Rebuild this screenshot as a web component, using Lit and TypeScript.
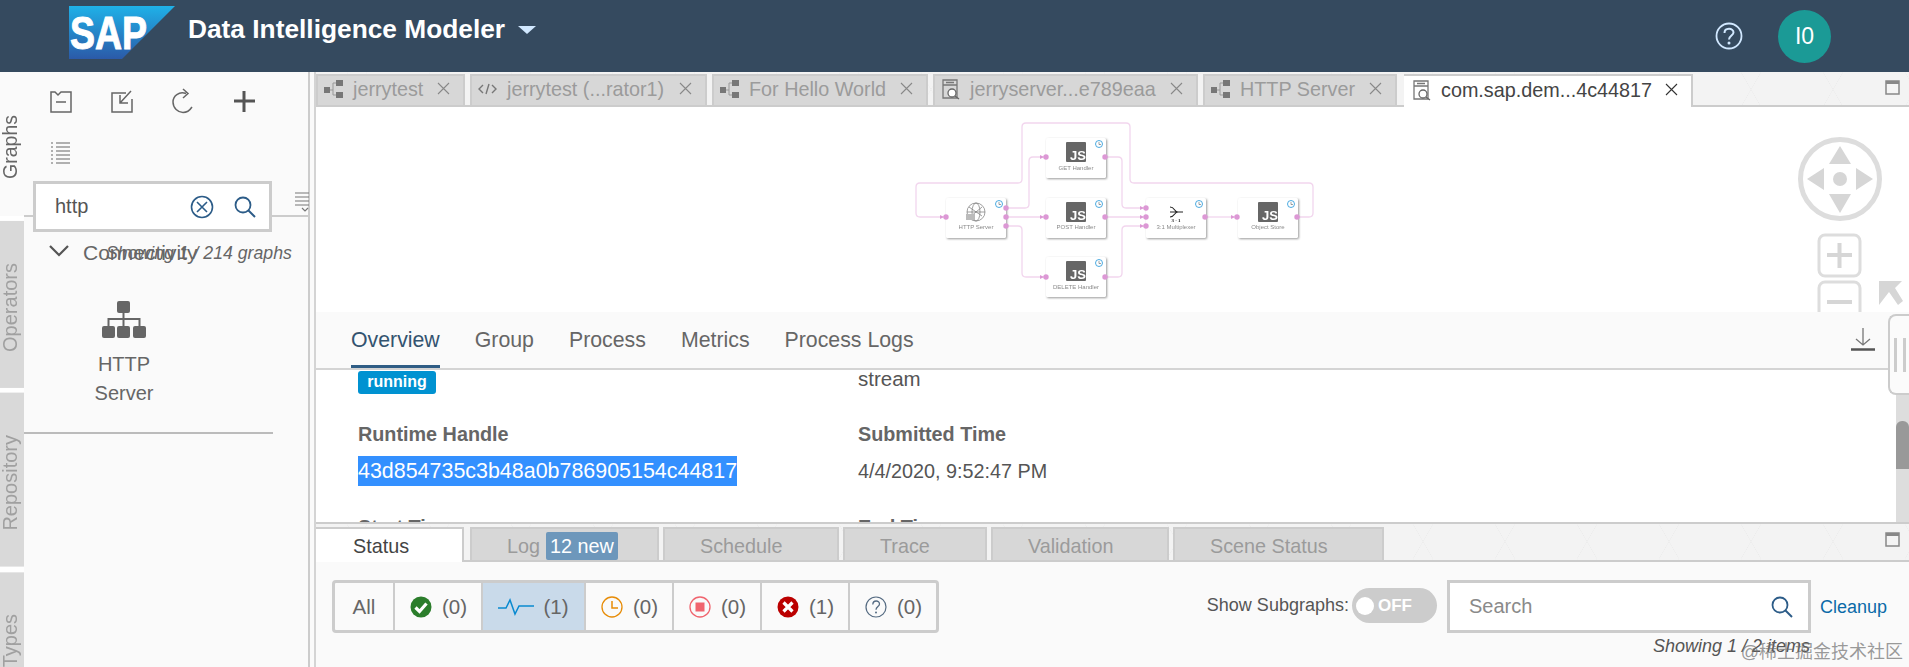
import { LitElement, html, css, svg } from "lit";
import { customElement } from "lit/decorators.js";

const wire = (pts: number[][], r = 4) => {
  let d = `M${pts[0][0]} ${pts[0][1]}`;
  for (let i = 1; i < pts.length; i++) {
    const p = pts[i], prev = pts[i - 1], next = pts[i + 1];
    if (!next) { d += ` L${p[0]} ${p[1]}`; break; }
    const ux = Math.sign(p[0] - prev[0]), uy = Math.sign(p[1] - prev[1]);
    const vx = Math.sign(next[0] - p[0]), vy = Math.sign(next[1] - p[1]);
    d += ` L${p[0] - ux * r} ${p[1] - uy * r} Q${p[0]} ${p[1]} ${p[0] + vx * r} ${p[1] + vy * r}`;
  }
  return d;
};

const WIRES = [
  [[1006, 208], [1029, 208], [1029, 157], [1046, 157]],
  [[1006, 217], [1046, 217]],
  [[1006, 226], [1022, 226], [1022, 277], [1046, 277]],
  [[1105, 157], [1122, 157], [1122, 208], [1146, 208]],
  [[1105, 217], [1146, 217]],
  [[1105, 277], [1122, 277], [1122, 226], [1146, 226]],
  [[1205, 217], [1237, 217]],
  [[1297, 217], [1313, 217], [1313, 183], [1130, 183], [1130, 123], [1022, 123], [1022, 183], [916, 183], [916, 217], [946, 217]],
];

const NODES = [
  { x: 946, y: 198, w: 60, label: "HTTP Server", icon: "globe" },
  { x: 1046, y: 138, w: 60, label: "GET Handler", icon: "js" },
  { x: 1046, y: 198, w: 60, label: "POST Handler", icon: "js" },
  { x: 1046, y: 257, w: 60, label: "DELETE Handler", icon: "js" },
  { x: 1146, y: 198, w: 60, label: "3:1 Multiplexer", icon: "mux" },
  { x: 1238, y: 198, w: 60, label: "Object Store", icon: "js" },
];

const PORTS = [
  [946, 217], [1006, 208], [1006, 217], [1006, 226], [1046, 157], [1105, 157], [1046, 217], [1105, 217],
  [1046, 277], [1105, 277], [1146, 208], [1146, 217], [1146, 226], [1205, 217], [1237, 217], [1297, 217],
];

const graphIcon = svg`<rect x="1" y="8" width="6" height="6" fill="#777"/><rect x="13" y="1" width="7" height="6" fill="#777"/><rect x="13" y="13" width="7" height="6" fill="#777"/><path d="M7 11H10M13 4H10V16H13" fill="none" stroke="#999" stroke-width="1"/>`;
const runIcon = svg`<path d="M3 1H17V19H3ZM3 6H17M6 3.500H14" fill="none" stroke="#777" stroke-width="1.300"/><circle cx="12" cy="14" r="4" fill="#fff" stroke="#666" stroke-width="1.300"/><path d="M15 17L19 20" stroke="#666" stroke-width="1.300"/>`;
const codeIcon = svg`<path d="M6 6L2 10L6 14M15 6L19 10L15 14M12 5L9 15" fill="none" stroke="#777" stroke-width="1.400"/>`;

const TOP_TABS = [
  { t: "jerrytest", i: graphIcon, w: 149 },
  { t: "jerrytest (...rator1)", i: codeIcon, w: 237 },
  { t: "For Hello World", i: graphIcon, w: 216 },
  { t: "jerryserver...e789eaa", i: runIcon, w: 265 },
  { t: "HTTP Server", i: graphIcon, w: 194 },
  { t: "com.sap.dem...4c44817", i: runIcon, w: 289, active: true },
];

const FILTERS = [
  { n: "(0)", i: svg`<circle cx="12" cy="12" r="10.500" fill="#2b7d2b"/><path d="M6.500 12.500L10.500 16.500L17.500 8.500" fill="none" stroke="#fff" stroke-width="3.200"/>` },
  { n: "(1)", sel: true, wide: true, i: svg`<path d="M0 13H8L12 5L17 19L21 11H36" fill="none" stroke="#0a8ad0" stroke-width="1.500" />` },
  { n: "(0)", i: svg`<circle cx="12" cy="12" r="10" fill="none" stroke="#e78c07" stroke-width="1.300"/><path d="M12 6V13H18" fill="none" stroke="#e78c07" stroke-width="1.500"/>` },
  { n: "(0)", i: svg`<circle cx="12" cy="12" r="10" fill="none" stroke="#f0646e" stroke-width="1.300"/><rect x="7.500" y="7.500" width="9" height="9" fill="#f0646e"/>` },
  { n: "(1)", i: svg`<circle cx="12" cy="12" r="10.500" fill="#bb0000"/><path d="M7.500 7.500L16.500 16.500M16.500 7.500L7.500 16.500" stroke="#fff" stroke-width="3.200"/>` },
  { n: "(0)", i: svg`<circle cx="12" cy="12" r="10" fill="none" stroke="#556b82" stroke-width="1.200"/><path d="M8.800 9.500C9 4.800 15.500 5 15.500 9C15.500 11.500 12 11.500 12 14.800" fill="none" stroke="#556b82" stroke-width="1.300"/><circle cx="12" cy="17.500" r="1" fill="#556b82"/>` },
];

const BOTTOM_TABS = [
  { t: "Schedule", w: 176 },
  { t: "Trace", w: 144 },
  { t: "Validation", w: 178 },
  { t: "Scene Status", w: 211 },
];

const searchIcon = html`<svg width="24" height="24" viewBox="0 0 24 24"><circle cx="10" cy="10" r="7.500" fill="none" stroke="#2c5c88" stroke-width="1.800"/><path d="M15.500 15.500L22 22" stroke="#2c5c88" stroke-width="2"/></svg>`;
const closeIcon = html`<svg class="x" width="13" height="13" viewBox="0 0 13 13"><path d="M1 1L12 12M12 1L1 12" stroke="currentColor" stroke-width="1.100"/></svg>`;
const maxIcon = html`<svg class="max" width="15" height="15" viewBox="0 0 15 15"><rect x="1" y="1" width="13" height="13" fill="#f4f4f4" stroke="#888" stroke-width="1.500"/><rect x="1" y="1" width="13" height="3" fill="#888"/></svg>`;

@customElement("app-root")
export class AppRoot extends LitElement {
  static styles = css`
    :host { display: block; width: 1909px; height: 667px; overflow: hidden; position: relative; background: #fafafa;
      font-family: "Liberation Sans", Arial, sans-serif; color: #666; }
    .shell { display: grid; grid-template-rows: 72px 595px; height: 667px; }
    header { background: #354a5f; display: flex; align-items: center; padding-left: 69px; }
    .logo { display: block; margin-top: -6px; }
    .title { color: #fff; font-size: 26.300px; font-weight: 700; margin-left: 12px; margin-top: -13px; white-space: nowrap; }
    .caret { margin: -12px 0 0 13px; width: 0; height: 0; border-left: 9px solid transparent; border-right: 9px solid transparent; border-top: 8px solid #d1e8ff; }
    .hdr-right { margin-left: auto; display: flex; align-items: center; gap: 35px; margin-right: 78px; }
    .avatar { width: 53px; height: 53px; border-radius: 50%; background: #1b9a96; color: #fff; font-size: 23px; display: flex; align-items: center; justify-content: center; }
    .body { display: flex; min-height: 0; overflow: hidden; }

    .rail { width: 24px; flex: none; display: flex; flex-direction: column; gap: 5px; background: #fff; }
    .rail div { background: #d9d9d9; color: #a0a0a0; writing-mode: vertical-rl; transform: rotate(180deg); font-size: 20px; line-height: 20px; padding: 36px 0 42px 4px; flex: none; width: 20px; text-align: left; white-space: nowrap; }
    .rail div.on { background: #fafafa; color: #666; font-size: 19.500px; padding: 37px 0 43px 4px; }

    .left { width: 284px; flex: none; background: #fafafa; position: relative; border-right: 2px solid #ccc; box-sizing: content-box; }
    .tools { display: grid; grid-template-columns: repeat(4, 61px); grid-auto-rows: 51px; padding: 3px 0 0 6px; height: 106px; box-sizing: border-box; align-items: center; justify-items: center; }
    .searchrow { position: relative; border-bottom: 2px solid #ccc; box-sizing: border-box; height: 39px; }
    .searchbox { position: absolute; left: 9px; top: 3px; width: 239px; height: 51px; box-sizing: border-box; border: 3px solid #ccc; background: #fff; display: flex; align-items: center; padding: 0 12px 0 19px; font-size: 20px; color: #555; z-index: 1; }
    .searchbox .clear { margin-left: auto; margin-right: 19px; display: block; }
    .filt { position: absolute; left: 270px; top: 13px; }
    .group { position: relative; height: 84px; }
    .conn { position: absolute; left: 59px; top: 24px; font-size: 21px; line-height: 24px; color: #666; white-space: nowrap; }
    .showing { position: absolute; left: 82px; top: 26px; font-size: 17.700px; line-height: 20px; font-style: italic; color: #666; white-space: nowrap; }
    .chev { position: absolute; left: 25px; top: 28px; }
    .gitem { width: 100px; margin-left: 50px; text-align: center; font-size: 20px; line-height: 29px; color: #666; display: flex; flex-direction: column; align-items: center; gap: 11px; }
    .gsep { height: 2px; background: #bbb; width: 249px; margin-top: 24px; }

    .main { flex: 1; min-width: 0; margin-left: 4px; border-left: 2px solid #d4d4d4; display: flex; flex-direction: column; background: #fff; position: relative; }
    .strip { background-color: #f3f3f3;
      background-image: linear-gradient(60deg, transparent 49.500%, #ebebeb 50%, transparent 50.500%), linear-gradient(-60deg, transparent 49.500%, #ebebeb 50%, transparent 50.500%);
      background-size: 82px 35px; display: flex; align-items: flex-end; position: relative; flex: none; }
    .toptabs { height: 35px; border-bottom: 2px solid #ccc; box-sizing: border-box; gap: 5px; }
    .tab { height: 31px; background: #d7d7d7; border: 2px solid #ccc; border-bottom: 0; box-sizing: border-box; display: flex; align-items: center; gap: 9px; padding: 0 13px 2px 5px; font-size: 19.800px; color: #9b9b9b; white-space: nowrap; flex: none; }
    .tab svg.ti { flex: none; }
    .tab .x { margin-left: auto; color: #888; margin-top: -3px; }
    .tab.on { background: #fff; color: #444; height: 33px; margin-bottom: -2px; padding: 0 13px 2px 7px; border-left: 0; margin-left: 2px; }
    .tab.on .x { color: #333; }
    .max { position: absolute; right: 9px; top: 8px; }

    .canvas { height: 205px; flex: none; position: relative; overflow: hidden; background: #fff; }
    .graph { position: absolute; left: 0; top: 0; filter: blur(0.3px); }
    .graph .node { fill: #fff; filter: drop-shadow(1px 1px 1px #999); }
    .graph text.lbl { font-family: "Liberation Sans", sans-serif; font-size: 6px; fill: #8a8a8a; text-anchor: middle; }
    .graph text.js { font-family: "Liberation Sans", sans-serif; font-size: 13px; font-weight: 700; fill: #fff; text-anchor: middle; }
    .graph text.mx { font-family: "Liberation Serif", serif; font-size: 5px; font-weight: 700; fill: #222; text-anchor: middle; }
    .nav { position: absolute; left: 1480px; top: 26px; }
    .corner { position: absolute; left: 1563px; top: 174px; }

    .dtabs { height: 58px; flex: none; box-sizing: border-box; background: #fafafa; border-bottom: 2px solid #d4d4d4; display: flex; gap: 35px; padding-left: 35px; font-size: 21.300px; position: relative; }
    .dtabs span { height: 56px; display: flex; align-items: center; box-sizing: border-box; color: #666; white-space: nowrap; }
    .dtabs span.on { color: #33536f; border-bottom: 3px solid #2f5d85; padding-top: 3px; }
    .dl { position: absolute; right: 34px; top: 15px; }

    .details { height: 152px; flex: none; overflow: hidden; display: grid; grid-template-columns: 500px 1fr; grid-template-rows: 49px 26px 39px 1fr; padding-left: 42px; box-sizing: border-box; background: #fff; font-size: 19.800px; color: #555; padding-top: 2px; }
    .details b { color: #666; font-size: 19.800px; display: block; align-self: end; line-height: 26px; }
    .details .v { line-height: 30px; align-self: end; }
    .badge { align-self: start; justify-self: start; width: 78px; height: 23px; background: #0092d1; border-radius: 3px; color: #fff; font-weight: 700; font-size: 16px; line-height: 21px; text-align: center; margin-top: -1px; }
    .stream { align-self: start; line-height: 20px; margin-top: -3px; font-size: 20.500px; }
    .sel { background: #3390ff; color: #fff; display: block; width: fit-content; font-size: 21.450px; line-height: 30px; }
    .details b.rowc { padding-top: 28px; align-self: start; }

    .grip { position: absolute; right: 0; top: 242px; width: 21px; height: 81px; box-sizing: border-box; border: 2px solid #ccc; border-right: 0; border-radius: 8px 0 0 8px; background: #fbfbfb; display: flex; gap: 6px; align-items: center; justify-content: center; z-index: 2; }
    .grip i { width: 3px; height: 34px; background: #ccc; display: block; }
    .track { position: absolute; right: 0; top: 323px; width: 13px; height: 127px; background: #ddd; }
    .thumb { position: absolute; right: 0; top: 349px; width: 13px; height: 48px; background: #999; border-radius: 6px 6px 0 0; }

    .bottom { flex: 1; min-height: 0; border-top: 2px solid #ccc; position: relative; background: #fafafa; display: flex; flex-direction: column; }
    .btabs { height: 38px; border-bottom: 2px solid #ccc; box-sizing: border-box; gap: 4px; }
    .bt { height: 33px; box-sizing: border-box; background: #d7d7d7; border: 2px solid #ccc; border-bottom: 0; display: flex; align-items: center; font-size: 19.800px; color: #9b9b9b; white-space: nowrap; padding: 3px 0 0 35px; flex: none; }
    .bt.on { background: #fff; color: #444; margin-bottom: -2px; height: 35px; border-left: 0; padding: 1px 0 0 37px; margin-right: 2px; }
    .bt .nw { background: #6d97bb; color: #fff; height: 28px; line-height: 28px; padding: 0 4px; border-radius: 2px; margin: -1px 0 0 6px; }
    .panel { flex: 1; display: flex; align-items: flex-start; padding: 18px 0 0 16px; background: #fafafa; position: relative; }
    .seg { display: flex; height: 53px; border: 3px solid #ccc; border-radius: 4px; box-sizing: border-box; background: #fafafa; }
    .seg > div { display: flex; align-items: center; justify-content: center; gap: 9px; font-size: 20.500px; color: #666; width: 86px; border-right: 2px solid #ccc; }
    .seg > div:last-child { border-right: 0; }
    .seg > div.all { width: 58px; }
    .seg > div.sel2 { background: #c9daea; width: 101px; }
    .subs { margin-left: auto; display: flex; align-items: flex-start; }
    .slabel { font-size: 18px; color: #555; margin-top: 15px; white-space: nowrap; margin-right: 3px; }
    .toggle { width: 85px; height: 35px; border-radius: 18px; background: #ccc; margin-top: 8px; display: flex; align-items: center; gap: 4px; padding-left: 4px; box-sizing: border-box; color: #fff; font-weight: 700; font-size: 17px; }
    .toggle i { width: 18px; height: 18px; background: #fff; border-radius: 50%; display: block; }
    .sbox { width: 364px; height: 53px; box-sizing: border-box; border: 3px solid #ccc; background: #fff; margin-left: 10px; display: flex; align-items: center; justify-content: space-between; padding: 0 14px 0 19px; color: #8a8a8a; font-size: 20px; }
    .clean { color: #0a6aa8; font-size: 18px; margin: 17px 22px 0 9px; }
    .count { position: absolute; right: 99px; top: 74px; font-size: 18px; line-height: 20px; font-style: italic; color: #555; white-space: nowrap; }
    .wm { position: absolute; right: 6px; bottom: 4px; font-family: "Liberation Sans", "Noto Sans CJK SC", sans-serif; font-size: 18px; color: rgba(110,110,110,0.7); white-space: nowrap; z-index: 5; }
  `;

  private renderGraph() {
    return html`<svg class="graph" width="1593" height="205" viewBox="316 107 1593 205">
      ${WIRES.map((w) => svg`<path d=${wire(w)} fill="none" stroke="#f2d6ee" stroke-width="1.300"/>`)}
      ${NODES.map((n) => {
        const cx = n.x + n.w / 2;
        const ly = n.y + (n.label.startsWith("DELETE") ? 32 : n.label.startsWith("GET") ? 32 : 31);
        const sx = n.x + n.w - 7;
        return svg`<rect class="node" x=${n.x} y=${n.y} width=${n.w} height="40" rx="1.500"/>
          ${n.icon === "js" ? svg`<rect x=${cx - 10} y=${n.y + 4} width="20" height="20" rx="1" fill="#666"/><text class="js" x=${cx + 2} y=${n.y + 22}>JS</text>` : ""}
          ${n.icon === "globe" ? svg`<g fill="none" stroke="#777" stroke-width="0.700"><circle cx=${cx} cy=${n.y + 14} r="9"/><ellipse cx=${cx} cy=${n.y + 14} rx="4" ry="9"/><path d="M${cx - 9} ${n.y + 14}H${cx + 9}M${cx - 7} ${n.y + 9}L${cx + 6} ${n.y + 18}M${cx + 6} ${n.y + 9}L${cx - 6} ${n.y + 19}"/></g><rect x=${cx - 10} y=${n.y + 16} width="9" height="6" fill="#bbb"/>` : ""}
          ${n.icon === "mux" ? svg`<path d="M${cx - 6} ${n.y + 9}C${cx - 1} ${n.y + 9} ${cx - 2} ${n.y + 14} ${cx + 2} ${n.y + 14}M${cx - 6} ${n.y + 14}H${cx + 7}M${cx - 6} ${n.y + 19}C${cx - 1} ${n.y + 19} ${cx - 2} ${n.y + 14} ${cx + 2} ${n.y + 14}" fill="none" stroke="#222" stroke-width="1.100"/><text class="mx" x=${cx} y=${n.y + 24}>3 · 1</text>` : ""}
          <circle cx=${sx} cy=${n.y + 6} r="3.500" fill="none" stroke="#2196d8" stroke-width="0.800"/>
          <path d="M${sx} ${n.y + 4}V${n.y + 6.500}H${sx + 2}" fill="none" stroke="#444" stroke-width="0.500"/>
          <text class="lbl" x=${cx} y=${ly}>${n.label}</text>`;
      })}
      ${PORTS.map((p) => svg`<circle cx=${p[0]} cy=${p[1]} r="2.700" fill="#dc98d5"/>`)}
      ${[[946,217],[1046,157],[1046,217],[1046,277],[1146,208],[1146,217],[1146,226],[1237,217]].map((p) => svg`<path d="M${p[0]-6} ${p[1]-2}L${p[0]-2} ${p[1]}L${p[0]-6} ${p[1]+2}Z" fill="#dc98d5"/>`)}
    </svg>
    <svg class="nav" width="90" height="180" viewBox="0 0 90 180">
      <circle cx="44" cy="46" r="39.500" fill="#fff" stroke="#ddd" stroke-width="5"/>
      <path d="M44 13L55 31H33ZM44 80L33 61H55ZM11 46L28 35V57ZM77 46L60 35V57Z" fill="#d6d6d6"/>
      <circle cx="44" cy="46" r="7" fill="#d6d6d6"/>
      <rect x="23" y="102" width="41" height="41" rx="6" fill="#fff" stroke="#ddd" stroke-width="3"/>
      <path d="M31 122H56M43.500 110V135" stroke="#d6d6d6" stroke-width="4"/>
      <rect x="23" y="149" width="41" height="41" rx="6" fill="#fff" stroke="#ddd" stroke-width="3"/>
      <path d="M31 169H56" stroke="#d6d6d6" stroke-width="4"/>
    </svg>`;
  }

  render() {
    return html`<div class="shell">
      <header>
        <svg class="logo" width="107" height="54" viewBox="0 0 107 54">
          <defs><linearGradient id="sapg" x1="0" y1="0" x2="0" y2="1"><stop offset="0" stop-color="#1fb1e8"/><stop offset="1" stop-color="#2b5aa8"/></linearGradient></defs>
          <path d="M0 0H106L53 53H0Z" fill="url(#sapg)"/>
          <text x="1" y="43" font-family="Liberation Sans" font-weight="700" font-size="46" fill="#fff" stroke="#fff" stroke-width="1" textLength="77" lengthAdjust="spacingAndGlyphs">SAP</text>
        </svg>
        <div class="title">Data Intelligence Modeler</div>
        <div class="caret"></div>
        <div class="hdr-right">
          <svg width="28" height="28" viewBox="0 0 28 28"><circle cx="14" cy="14" r="12.500" fill="none" stroke="#d1e8ff" stroke-width="1.800"/><path d="M9.500 11C9.500 5.500 18.500 5.500 18.500 10.500C18.500 13.500 14 13.500 14 17.500" fill="none" stroke="#d1e8ff" stroke-width="2"/><circle cx="14" cy="21" r="1.500" fill="#d1e8ff"/></svg>
          <div class="avatar">I0</div>
        </div>
      </header>
      <div class="body">
        <div class="rail">
          <div class="on">Graphs</div><div>Operators</div><div>Repository</div><div>Types</div>
        </div>
        <div class="left">
          <div class="tools">
            <svg width="24" height="24" viewBox="0 0 24 24"><path d="M2 3H6L9 6L12 3H22V23H2ZM2 3V23M7 13H17" fill="none" stroke="#666" stroke-width="1.500"/></svg>
            <svg width="24" height="24" viewBox="0 0 24 24"><path d="M16 4H2V23H22V10M21 2L10 14M10 6V14H18" fill="none" stroke="#666" stroke-width="1.500"/></svg>
            <svg width="24" height="26" viewBox="0 0 24 26"><path d="M15 5.500C8 3 2 8 2 14C2 20 7 24.500 12 24.500C16 24.500 19 22 21 19M12 1L17 5.500L12 10" fill="none" stroke="#666" stroke-width="1.500"/></svg>
            <svg width="24" height="24" viewBox="0 0 24 24"><path d="M12 2V23M2 12H23" stroke="#555" stroke-width="3"/></svg>
            <svg width="22" height="24" viewBox="0 0 22 24"><path d="M6 3H20M6 7H20M6 11H20M6 15H20M6 19H20M6 23H20M1 3H3M1 7H3M1 11H3M1 15H3M1 19H3M1 23H3" stroke="#666" stroke-width="1.200"/></svg>
          </div>
          <div class="searchrow">
            <div class="searchbox">http
              <svg class="clear" width="24" height="24" viewBox="0 0 24 24"><circle cx="12" cy="12" r="10.500" fill="none" stroke="#2c5c88" stroke-width="1.600"/><path d="M7 7L17 17M17 7L7 17" stroke="#2c5c88" stroke-width="1.600"/></svg>
              ${searchIcon}
            </div>
            <svg class="filt" width="16" height="22" viewBox="0 0 16 22"><path d="M1 2H15M1 6H15M1 10H15M1 14H15M8 17L11 20L14 17" fill="none" stroke="#777" stroke-width="1.200"/></svg>
          </div>
          <div class="group">
            <svg class="chev" width="20" height="12" viewBox="0 0 20 12"><path d="M1 1L10 10L19 1" fill="none" stroke="#555" stroke-width="2.200"/></svg>
            <span class="conn">Connectivity</span>
            <span class="showing">Showing 1 / 214 graphs</span>
          </div>
          <div class="gitem">
            <svg width="44" height="38" viewBox="0 0 44 38"><g fill="#666"><rect x="15" y="0" width="13" height="12" rx="2"/><rect x="0" y="25" width="13" height="12" rx="2"/><rect x="15" y="25" width="13" height="12" rx="2"/><rect x="31" y="25" width="13" height="12" rx="2"/></g><path d="M21.500 12V25M6.500 25V18H37.500V25" fill="none" stroke="#666" stroke-width="2"/></svg>
            <div>HTTP<br/>Server</div>
          </div>
          <div class="gsep"></div>
        </div>
        <div class="main">
          <div class="strip toptabs">
            ${TOP_TABS.map((t) => html`<div class="tab ${t.active ? "on" : ""}" style="width:${t.w}px"><svg class="ti" width="21" height="21" viewBox="0 0 21 21">${t.i}</svg><span>${t.t}</span>${closeIcon}</div>`)}
            ${maxIcon}
          </div>
          <div class="canvas">
            ${this.renderGraph()}
            <svg class="corner" width="24" height="24" viewBox="0 0 24 24"><path d="M0 0H23L16 7L24 20L19 24L10 11L0 24Z" fill="#d6d6d6"/></svg>
          </div>
          <div class="dtabs">
            <span class="on">Overview</span><span>Group</span><span>Process</span><span>Metrics</span><span>Process Logs</span>
            <svg class="dl" width="24" height="24" viewBox="0 0 24 24"><path d="M12 1V18M5 12L12 18L19 12" fill="none" stroke="#777" stroke-width="1.300"/><path d="M0 22.500H24" stroke="#555" stroke-width="2.500"/></svg>
          </div>
          <div class="details">
            <div class="badge">running</div>
            <div class="stream">stream</div>
            <b>Runtime Handle</b>
            <b>Submitted Time</b>
            <div class="v"><span class="sel">43d854735c3b48a0b786905154c44817</span></div>
            <div class="v">4/4/2020, 9:52:47 PM</div>
            <b class="rowc">Start Time</b>
            <b class="rowc">End Time</b>
          </div>
          <div class="track"></div>
          <div class="thumb"></div>
          <div class="grip"><i></i><i></i></div>
          <div class="bottom">
            <div class="strip btabs">
              <div class="bt on" style="width:148px">Status</div>
              <div class="bt" style="width:189px">Log <span class="nw">12 new</span></div>
              ${BOTTOM_TABS.map((t) => html`<div class="bt" style="width:${t.w}px">${t.t}</div>`)}
              ${maxIcon}
            </div>
            <div class="panel">
              <div class="seg">
                <div class="all">All</div>
                ${FILTERS.map((f) => html`<div class=${f.sel ? "sel2" : ""}><svg width=${f.wide ? 36 : 24} height="24" viewBox="0 0 ${f.wide ? 36 : 24} 24">${f.i}</svg>${f.n}</div>`)}
              </div>
              <div class="subs">
                <span class="slabel">Show Subgraphs:</span>
                <div class="toggle"><i></i>OFF</div>
                <div class="sbox">Search ${searchIcon}</div>
                <span class="clean">Cleanup</span>
              </div>
              <div class="count">Showing 1 / 2 items</div>
              <div class="wm">@稀土掘金技术社区</div>
            </div>
          </div>
        </div>
      </div>
    </div>`;
  }
}
